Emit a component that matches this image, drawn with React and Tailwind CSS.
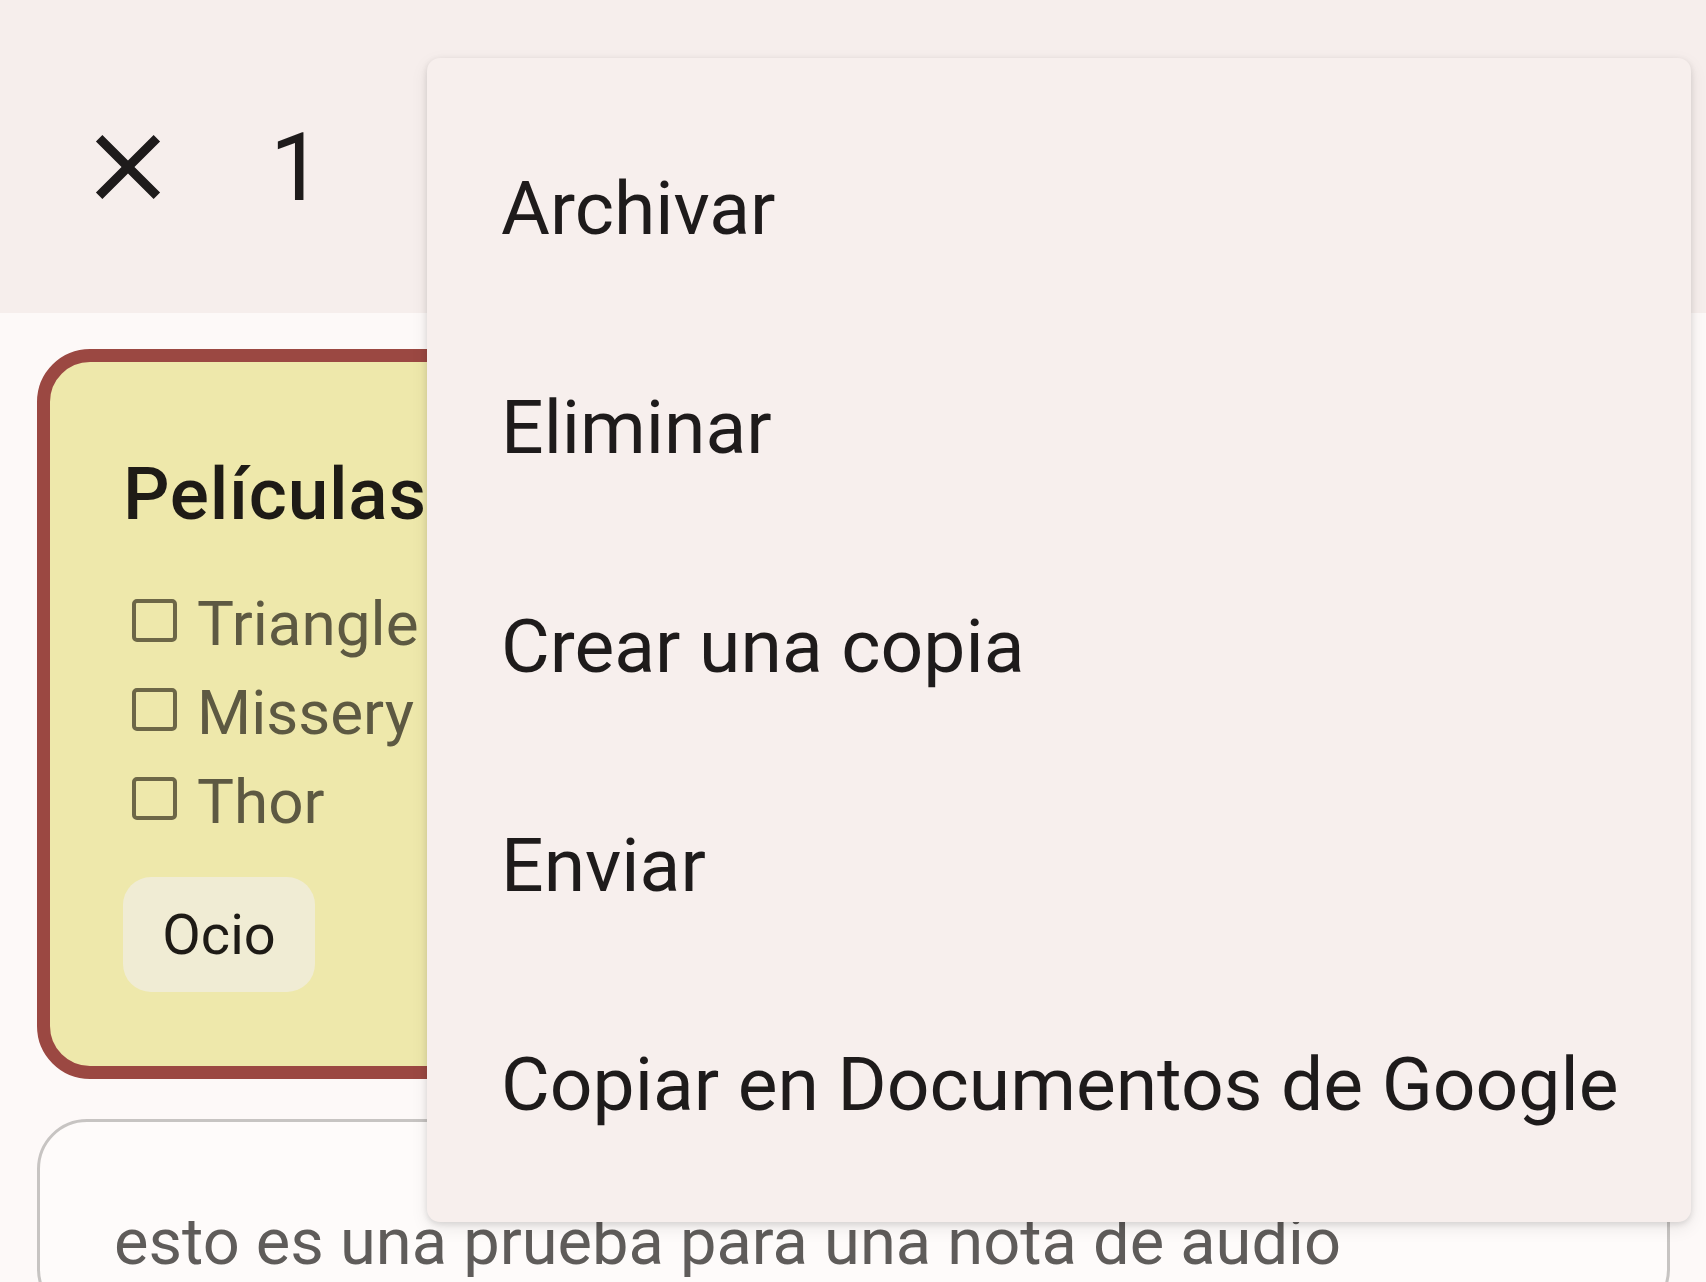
const menuItems = [
  "Archivar",
  "Eliminar",
  "Crear una copia",
  "Enviar",
  "Copiar en Documentos de Google",
];

const checklist = ["Triangle", "Missery", "Thor"];

function CloseIcon() {
  return (
    <svg viewBox="0 0 24 24" className="h-[110px] w-[110px] shrink-0" fill="#1e1b1b">
      <path d="M19 6.41L17.59 5 12 10.59 6.41 5 5 6.41 10.59 12 5 17.59 6.41 19 12 13.41 17.59 19 19 17.59 13.41 12z" />
    </svg>
  );
}

function Header() {
  return (
    <header className="flex h-[313px] items-start gap-[87px] bg-[#f6eeec] pl-[73px] pt-[112px]">
      <CloseIcon />
      <span className="text-[94px] leading-[112px] text-[#1e1b1b]">1</span>
    </header>
  );
}

function ChecklistNote() {
  return (
    <div className="w-[820px] rounded-[53px] border-[13px] border-[#9b4842] bg-[#eee8ab] pb-[74px] pl-[73px] pt-[92px]">
      <h2 className="text-[73px] font-medium leading-[80px] tracking-[0.01em] text-[#1e1b16]">Películas</h2>
      <ul className="mt-[45px]">
        {checklist.map((item) => (
          <li key={item} className="flex h-[89px] items-start">
            <span className="mt-[20px] ml-[9px] h-[43px] w-[45px] shrink-0 rounded-[5px] border-[4px] border-[#6d6747]" />
            <span className="ml-[20px] text-[62px] leading-[89px] text-[#5d5942]">{item}</span>
          </li>
        ))}
      </ul>
      <div className="mt-[31px] flex h-[115px] w-[192px] items-center justify-center rounded-[28px] bg-[#f0ecd4]">
        <span className="text-[56px] leading-[66px] text-[#1e1b16]">Ocio</span>
      </div>
    </div>
  );
}

function AudioNote() {
  return (
    <div className="h-[200px] w-[1633px] rounded-[50px] border-[3px] border-[#c7c4c2] bg-[#fefbfa] pl-[74px] pt-[82px]">
      <p className="text-[65px] leading-[76px] text-[#5f5c5a]">esto es una prueba para una nota de audio</p>
    </div>
  );
}

function OverflowMenu() {
  return (
    <div className="absolute left-[427px] top-[58px] h-[1164px] w-[1264px] rounded-[13px] bg-[#f7efed] pt-[40px] shadow-[0_2px_6px_rgba(0,0,0,0.12),0_6px_18px_rgba(0,0,0,0.08)]">
      {menuItems.map((item) => (
        <div key={item} className="flex h-[219px] items-center pl-[74px]">
          <span className="whitespace-nowrap text-[75px] leading-[86px] text-[#1e1b1b]">{item}</span>
        </div>
      ))}
    </div>
  );
}

export default function App() {
  return (
    <div className="relative h-[1282px] w-full overflow-hidden bg-[#fdf9f8] font-['Roboto',sans-serif]">
      <Header />
      <main className="flex flex-col gap-[40px] pl-[37px] pt-[36px]">
        <ChecklistNote />
        <AudioNote />
      </main>
      <OverflowMenu />
    </div>
  );
}
